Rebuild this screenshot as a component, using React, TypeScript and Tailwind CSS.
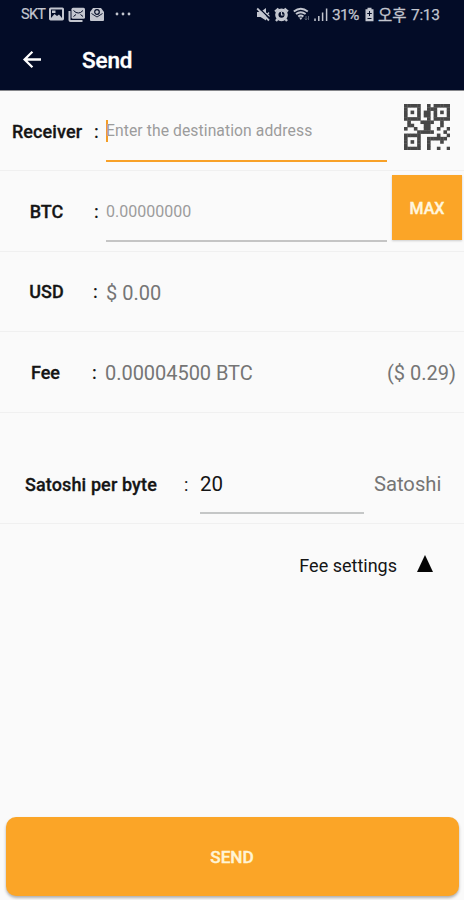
import React from 'react';

const QR = [
  'XXXXX..X.XXXXX',
  'X...X..XXX...X',
  'X.X.X.XX.X.X.X',
  'X...X.XX.X...X',
  'XXXXX..X.XXXXX',
  '.X...XXXX..X..',
  '.XX...XX...X..',
  'X..X..XX..X..X',
  '....XXXXX...X.',
  'XXXXX.....X..X',
  'X...X..XXXXXX.',
  'X.X.X..X...X..',
  'X...X..X......',
  'XXXXX..X..X..X',
];

function QrIcon() {
  return (
    <svg className="h-[46px] w-[46px]" viewBox="0 0 14 14" fill="#474747">
      {QR.flatMap((row, y) =>
        row.split('').map((c, x) =>
          c === 'X' ? <rect key={`${x}-${y}`} x={x} y={y} width="1.1" height="1.1" /> : null
        )
      )}
    </svg>
  );
}

function StatusBar() {
  return (
    <div className="flex h-7 items-center text-[#c3c6cf]">
      <span className="ml-[21px] w-[28px] pt-[2px] text-[14.5px] leading-none tracking-[-0.7px] [-webkit-text-stroke:0.2px_currentColor]">SKT</span>
      <svg className="h-[14px] w-[15px]" viewBox="0 0 15 14">
        <rect x="1" y="1.4" width="13" height="11" rx="0.6" fill="none" stroke="currentColor" strokeWidth="2" />
        <path d="M2 11 5.5 7l2.5 2 2-1.5L13 11v1H2Z" fill="currentColor" />
        <path d="M3 3.5h3.5v2.5H3Z" fill="currentColor" />
      </svg>
      <svg className="ml-[4px] h-[15px] w-[18px]" viewBox="0 0 18 15">
        <path d="M1.5 4v9q0 1 1 1h12" fill="none" stroke="currentColor" strokeWidth="2" />
        <rect x="3.5" y="0.8" width="13.5" height="11" rx="1.5" fill="currentColor" />
        <path d="M5.5 3.5 8 5.5l2.3.5 2.2-.5L15 3.5M5.5 9.5l2.5-2M15 9.5l-2.5-2" fill="none" stroke="#030c27" strokeWidth="1" />
      </svg>
      <svg className="ml-[3px] h-[15px] w-[16px]" viewBox="0 0 16 15">
        <path d="M1 5 4 1h8l3 4v8q0 1-1 1H2q-1 0-1-1Z" fill="currentColor" />
        <path d="M2.5 6.5 8 10l5.5-3.5" fill="none" stroke="#030c27" strokeWidth="0.9" />
        <circle cx="8" cy="5" r="2.3" fill="none" stroke="#030c27" strokeWidth="1.2" />
      </svg>
      <svg className="ml-[10px] h-[4px] w-[18px]" viewBox="0 0 18 4" fill="currentColor">
        <circle cx="2" cy="2" r="1.4" />
        <circle cx="8" cy="2" r="1.4" />
        <circle cx="14" cy="2" r="1.4" />
      </svg>
      <svg className="ml-[123px] h-[15px] w-[14px]" viewBox="0 0 14 15">
        <path d="M1 5h3.5L10 1v12.5L4.5 10H1Z" fill="currentColor" />
        <path d="M10 6 13.5 9.5M13 5.5 10 9" stroke="currentColor" strokeWidth="1.2" />
        <path d="M2.5 .5 14 12" stroke="#030c27" strokeWidth="1.3" />
        <path d="M1.2 1.5 13 13.5" stroke="currentColor" strokeWidth="1.8" />
      </svg>
      <svg className="ml-[4px] h-[15px] w-[15px]" viewBox="0 0 15 15">
        <circle cx="7.5" cy="7.8" r="4.7" fill="none" stroke="currentColor" strokeWidth="3.3" />
        <path d="M1 4.5 4.5 1.5M10.5 1.5 14 4.5M3.5 12 2 14M11.5 12 13 14" stroke="currentColor" strokeWidth="2.3" />
        <path d="M7.5 5v3h2" fill="none" stroke="currentColor" strokeWidth="1.2" />
      </svg>
      <svg className="ml-[4px] h-[15px] w-[18px]" viewBox="0 0 18 15" fill="none">
        <path d="M.8 4.4q7-5.5 14 0M3 7q4.8-3.7 9.6 0M5.2 9.5q2.6-2 5.2 0" stroke="currentColor" strokeWidth="1.9" />
        <path d="M6 10.4h3.6L7.8 13Z" fill="currentColor" />
        <path d="M13 9v4M11.8 11.5 13 13l1.2-1.5M15.5 13V9" stroke="#565e70" strokeWidth="1" />
      </svg>
      <svg className="ml-[3px] h-[15px] w-[14px]" viewBox="0 0 14 15" stroke="currentColor" strokeWidth="1.5">
        <path d="M1 14v-2.5M4.8 14V9M8.6 14V5.5M12.6 14V1.5" />
      </svg>
      <span className="ml-[4px] w-[28px] whitespace-nowrap pt-[3px] text-[15.5px] leading-none tracking-[-0.65px] [-webkit-text-stroke:0.25px_currentColor]">31%</span>
      <svg className="ml-[4px] h-[15px] w-[11px]" viewBox="0 0 11 15">
        <path d="M3.5.7h4v1.6h2v12h-8v-12h2Z" fill="currentColor" />
        <path d="M5.5 4v5M3.2 6.5h4.6M3.5 11.5h4" stroke="#030c27" strokeWidth="1" />
      </svg>
      <span className="ml-[3px] w-[32px] whitespace-nowrap pt-px font-['Noto_Sans_CJK_KR',sans-serif] text-[15.5px] leading-none [-webkit-text-stroke:0.3px_currentColor]">오후</span>
      <span className="ml-px whitespace-nowrap pt-[3px] text-[15.5px] leading-none tracking-[-0.3px] [-webkit-text-stroke:0.25px_currentColor]">7:13</span>
    </div>
  );
}

export default function App() {
  return (
    <div className="flex h-[900px] w-[464px] flex-col overflow-hidden bg-[#fafafa] font-[Roboto,sans-serif] text-[#151515]">
      <header className="h-[91px] border-b border-[#85868a] bg-[#030c27]">
        <StatusBar />
        <div className="flex h-[62px] items-center text-white">
          <svg className="ml-[22px] h-[20px] w-[20px]" viewBox="0 0 20 20" fill="none" stroke="currentColor" strokeWidth="2.3">
            <path d="M19 10.5H3M10.4 2.8 2.6 10.5l7.8 7.7" />
          </svg>
          <h1 className="ml-10 pt-[3px] text-[22.5px] font-medium tracking-[-0.15px] [-webkit-text-stroke:0.4px_white]">Send</h1>
        </div>
      </header>

      <section className="flex h-20 border-b border-[#f0f0f0]">
        <div className="flex h-20 w-[94px] items-center justify-center text-[18px] font-medium tracking-[0.1px] [-webkit-text-stroke:0.3px_currentColor]">Receiver</div>
        <span className="flex h-20 w-[12px] items-center text-[18px] font-medium">:</span>
        <div className="flex h-[71px] w-[281px] items-center border-b-2 border-[#f8a128] pt-[10px]">
          <span className="-mr-[2px] h-[22px] w-[2px] bg-[#f39d25]" />
          <span className="text-[15.7px] tracking-[0.08px] text-[#9c9c9c]">Enter the destination address</span>
        </div>
        <div className="ml-[17px] pt-[13px]"><QrIcon /></div>
      </section>

      <section className="flex h-[81px] border-b border-[#f0f0f0]">
        <div className="flex w-[93px] items-center justify-center text-[18px] font-medium [-webkit-text-stroke:0.3px_currentColor]">BTC</div>
        <span className="ml-px flex w-[12px] items-center text-[18px] font-medium">:</span>
        <div className="flex h-[71px] w-[281px] items-center border-b-2 border-[#c5c5c5] pt-[12px] text-[16px] text-[#9c9c9c]">0.00000000</div>
        <button className="ml-[5px] mt-[4px] h-[65px] w-[70px] bg-[#fba527] pt-[2px] text-[16px] font-medium text-[#fff6df] shadow-[0_1px_2px_rgba(0,0,0,0.18)] [-webkit-text-stroke:0.4px_currentColor]">MAX</button>
      </section>

      <section className="flex h-20 items-center border-b border-[#f0f0f0]">
        <div className="w-[93px] text-center text-[18px] font-medium [-webkit-text-stroke:0.3px_currentColor]">USD</div>
        <span className="w-[13px] text-[18px] font-medium">:</span>
        <span className="pt-[2px] text-[20px] text-[#757575]">$ 0.00</span>
      </section>

      <section className="flex h-[81px] items-center border-b border-[#f0f0f0]">
        <div className="w-[91px] text-center text-[18px] font-medium [-webkit-text-stroke:0.3px_currentColor]">Fee</div>
        <span className="ml-px w-[13px] text-[18px] font-medium">:</span>
        <span className="pt-[2px] text-[20px] tracking-[-0.04px] text-[#757575]">0.00004500 BTC</span>
        <span className="ml-auto mr-[8px] pt-[2px] text-[20px] text-[#757575]">($ 0.29)</span>
      </section>

      <section className="flex h-[111px] border-b border-[#f0f0f0] pt-[31px]">
        <div className="flex h-20 w-[158px] items-center whitespace-nowrap pl-[25px] text-[18px] font-medium tracking-[0.12px] [-webkit-text-stroke:0.3px_currentColor]">Satoshi per byte</div>
        <span className="ml-[26px] flex h-20 w-[16px] items-center text-[18px]">:</span>
        <div className="flex h-[70px] w-[164px] items-center border-b-2 border-[#c5c7c7] pt-[13px] text-[20.5px]">20</div>
        <span className="ml-[10px] flex h-20 items-center pt-px text-[20.2px] text-[#757575]">Satoshi</span>
      </section>

      <div className="flex h-[82px] items-center justify-end pr-[31px]">
        <span className="mr-[20px] text-[18px]">Fee settings</span>
        <svg className="mb-[2px] h-[18px] w-[16px]" viewBox="0 0 16 18"><path d="M8 0 16 17H0Z" fill="#050505" /></svg>
      </div>

      <button className="mx-auto mb-[4px] mt-auto h-[79px] w-[453px] rounded-[10px] bg-[#fba527] pt-[2px] text-[17.2px] font-medium text-[#fff4d5] shadow-[0_2px_3px_rgba(0,0,0,0.3)] [-webkit-text-stroke:0.4px_currentColor]">SEND</button>
    </div>
  );
}
